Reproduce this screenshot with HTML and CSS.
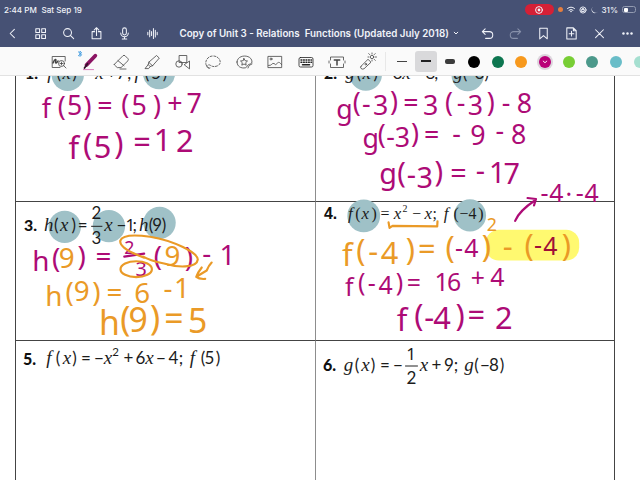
FILE: index.html
```html
<!DOCTYPE html>
<html lang="en">
<head>
    <meta charset="UTF-8">
    <meta name="viewport" content="width=device-width, initial-scale=1.0">
    <title>Copy of Unit 3 - Relations Functions</title>
    <link rel="stylesheet" href="styles.css">
</head>
<body>
    <header class="header">
        <div class="status">
            <span class="time">2:44 PM</span>
            <span class="date">Sat Sep 19</span>
            <div class="status-right">
                <span class="record"><svg width="10" height="10" viewBox="0 0 10 10"><circle cx="5" cy="5" r="3.4"/><circle class="solid" cx="5" cy="5" r="1.4"/></svg></span>
                <span class="mic-dot"></span>
                <svg width="8" height="7" viewBox="0 0 8 7"><path d="M.5 2.5Q4-.4 7.5 2.5M2 4.2Q4 2.6 6 4.2"/><circle class="solid" cx="4" cy="5.5" r=".8"/></svg>
                <svg class="lock" width="8" height="8" viewBox="0 0 8 8"><circle cx="4" cy="4" r="3.1"/><path d="M2.7 3.7h2.6v1.8H2.7zM3.2 3.7V2.5h1.6v1.2"/></svg>
                <svg class="moon" width="7" height="8" viewBox="0 0 7 8"><path class="solid" d="M2 .8A3.5 3.5 0 1 0 7 5.5 3.4 3.4 0 0 1 2 .8z"/></svg>
                <span class="percent">31%</span>
                <span class="battery"><i></i></span>
            </div>
        </div>
        <nav class="nav">
            <div class="nav-group">
                <svg viewBox="0 0 16 16"><path d="M10 3.5L5.5 8l4.5 4.5"/></svg>
                <svg viewBox="0 0 16 16"><path d="M3 3h4v4H3zM9.3 3h4v4h-4zM3 9.3h4v4H3zM9.3 9.3h4v4h-4z"/></svg>
                <svg viewBox="0 0 16 16"><circle cx="7" cy="7" r="4.2"/><path d="M10 10l3.5 3.5"/></svg>
                <svg viewBox="0 0 16 16"><path d="M6 6H3.3v7.5h9.4V6H10M8 10V2M5.5 4.3L8 1.8l2.5 2.5"/></svg>
                <svg viewBox="0 0 16 16"><rect x="6" y="2" width="4" height="7.5" rx="2"/><path d="M4 7.5a4 4 0 0 0 8 0M8 11.7v2.2M5.6 13.9h4.8"/></svg>
                <svg viewBox="0 0 16 16"><path d="M3 6.8v2.6M5 4.5v7M7 6v4M9 2.8v10.4M11 4.6v7M13 6.8v2.6"/></svg>
            </div>
            <div class="title">Copy of Unit 3 - Relations&nbsp; Functions (Updated July 2018)</div>
            <svg class="chevron" viewBox="0 0 8 8"><path d="M2.2 3.2L4 5l1.8-1.8"/></svg>
            <div class="nav-group right">
                <svg viewBox="0 0 16 16"><path d="M5.5 3L2.5 6l3 3M2.7 6H10a3.6 3.6 0 0 1 0 7.2H6"/></svg>
                <svg class="dim" viewBox="0 0 16 16"><path d="M10.5 3l3 3-3 3M13.3 6H6a3.6 3.6 0 0 0 0 7.2h4"/></svg>
                <svg viewBox="0 0 16 16"><path d="M4 2.3h8v11.4l-4-3.5-4 3.5z"/></svg>
                <svg viewBox="0 0 16 16"><path d="M3 2h7l3 3v8.8H3zM10 2v3h3M8 5.7v5M5.5 8.2h5"/></svg>
                <svg viewBox="0 0 16 16"><path d="M3.8 4l8.4 8.4M12.2 4l-8.4 8.4"/></svg>
                <svg viewBox="0 0 16 16"><g class="solid"><circle cx="3.7" cy="8" r="1.3"/><circle cx="8" cy="8" r="1.3"/><circle cx="12.3" cy="8" r="1.3"/></g></svg>
            </div>
        </nav>
    </header>

    <div class="toolbar">
        <div class="tools">
            <svg viewBox="0 0 18 18"><path d="M10 14.5H2.2v-11h13V8"/><path class="bold" d="M3 10c2-5 3.5-4 2.7-1.5S7 10 8 8"/><circle cx="11.5" cy="10.5" r="3"/><path d="M13.7 12.7l2.3 2.3M10 10.5h3M11.5 9v3"/></svg>
            <svg class="pen" viewBox="0 0 18 18"><path class="pen-body" d="M14.3 2.7L5.5 12"/><path class="pen-tip" d="M6.5 10.8l-3 4.2"/><path class="pen-line" d="M2.5 16.6h10"/><path class="bluetooth" d="M-2.7-1.2l3.4 3-1.7 1.7v-5.4l1.7 1.7-3.4 3"/></svg>
            <svg viewBox="0 0 18 18"><path d="M2.5 11.2L11 2.7q1-.8 2 0l3 3q.8 1 0 2L9 14.6H5.3L2.5 12q-.4-.4 0-.8zM6 7.7l6 5M8 16h6"/></svg>
            <svg viewBox="0 0 18 18"><path d="M6 9l7.5-6.5 2.8 2.6L9.8 12.5zM6 9l-.8 2.6 2 2 2.6-1.1M5.2 11.6L2 15.6h3.5l1.7-2"/></svg>
            <svg viewBox="0 0 18 18"><path d="M5.5 2.5h7.3v7H5.5z"/><circle cx="5" cy="11" r="3.2"/><path d="M10.5 11.5l5-3.5v7.5z"/></svg>
            <svg viewBox="0 0 18 18"><path class="dash" d="M5 15C-1 12 2 3 9 3s10 8 4 10-6-2-9-1 0 4 2 3"/></svg>
            <svg viewBox="0 0 18 18"><path d="M2 9c0-8 15-8 15 0 0 2-3 2-4 3s-1 3-4 3c-5 0-7-3-7-6zM13 15c1-3 2-3 4-4"/><path d="M9 5.5l1.1 2.2 2.4.3-1.8 1.7.5 2.5L9 11l-2.2 1.2.5-2.5L5.5 8l2.4-.3z"/></svg>
            <svg viewBox="0 0 18 18"><path d="M2.3 3.4h13.4v11.2H2.3zM2.5 12.5C6 13 6 9.5 8 10.5s1 2 3 0 2.5-1.2 4.5 1"/><circle cx="5" cy="6" r="1"/></svg>
            <svg class="keyboard" viewBox="0 0 18 18"><rect x="2" y="4.5" width="14" height="9.5" rx="1.5"/><path class="keys" d="M4 7h10.5M4 9.3h10.5"/><path class="bold" d="M5.5 11.8h7"/></svg>
            <svg viewBox="0 0 18 18"><path d="M2.5 7V4h13v3M2.5 11v3.5h13V11M1 8v2M17 8v2"/><path class="bold" d="M6.3 7h5.4M9 7v5"/></svg>
            <svg viewBox="0 0 18 18"><path d="M2 13.3l7-7 3 2.9-7 6.6q-2 .8-3-.4t0-2.1z"/><circle cx="6.8" cy="11.2" r=".8"/><circle cx="13" cy="4" r="1.7"/><path d="M13 0v1M16.2 4h1.3M15.2 1.6l1-1M10.7 1.6l-1-1M15.3 6.4l1 1M13 7v1M9 4h1"/></svg>
        </div>
        <div class="sizes">
            <span class="size"><i class="thin"></i></span>
            <span class="size selected"><i class="medium"></i></span>
            <span class="size"><i class="thick"></i></span>
        </div>
        <div class="colors">
            <span class="color black"></span>
            <span class="color green"></span>
            <span class="color orange"></span>
            <span class="color magenta"><svg viewBox="0 0 8 8"><path d="M2.8 3.4L4 4.5l1.2-1.1"/></svg></span>
            <span class="color lime"></span>
            <span class="color teal"></span>
            <span class="color aqua"></span>
            <span class="color mint"></span>
        </div>
    </div>

    <!-- every cell keeps the page coordinates in its viewBox -->
    <main class="sheet">
        <section class="cell">
            <svg viewBox="15 76 300 126">
                <g class="spot"><circle cx="67" cy="74.7" r="16.3"/><circle cx="159" cy="73" r="16.3"/></g>
                <text class="number" x="24" y="79">1.</text>
                <text class="math" y="79" x="49 58 66 74 86 99 111 121 129 137 147 156 165"><tspan class="var">f</tspan>(<tspan class="var">x</tspan>)=<tspan class="var">x</tspan>+7;<tspan class="var">f</tspan>(5)</text>
                <text class="ink s27" x="45.5 61 74 87 104.5 125 139 157 175 194.5" y="118 116 115 116 115 114 115 115 113 113">f(5)=(5)+7</text>
                <text class="ink s30" x="73 87 102 118.5 142 162.5 185" y="160 156 159 155 154 152 153">f(5)=12</text>
            </svg>
        </section>
        <section class="cell">
            <svg viewBox="315 76 300 126">
                <g class="spot"><circle cx="365" cy="74.5" r="16.3"/><circle cx="467.7" cy="75" r="16.3"/></g>
                <text class="number" x="323" y="79">2.</text>
                <text class="math" y="79" x="349 358 366 375 384 397 406 422 430 436 449 458 465 473 482"><tspan class="var">g</tspan>(<tspan class="var">x</tspan>)=3<tspan class="var">x</tspan>−8; <tspan class="var">g</tspan>(−3)</text>
                <text class="ink s27" x="343.5 356 365.5 380 393.5 410.5 430.5 449 461 475.5 491 506.5 525" y="119 112 113 115 111 112 115 112 112 115 112 112 113">g(-3)=3(-3)-8</text>
                <text class="ink s27" x="370 381 390 402 414.5 431.5 456.5 478 500 519" y="149 145 147 148 144 145 144 146 141 145">g(-3)=-9-8</text>
                <text class="ink s29" x="387.5 401 411 424.5 438.5 458.5 480.5 497.5 512" y="185 184 186 189 183 184 182 184 185">g(-3)=-17</text>
            </svg>
        </section>
        <section class="cell">
            <svg viewBox="15 202 300 139">
                <g class="spot"><circle cx="64" cy="227" r="16.3"/><circle cx="108.5" cy="226.3" r="16.3"/><circle cx="159.5" cy="223" r="16.3"/></g>
                <text class="number" x="23" y="231.5">3.</text>
                <text class="math" y="231" x="48 55.5 63.5 73 82 108 121 130 134.5 143.5 151 157 164"><tspan class="var">h</tspan>(<tspan class="var">x</tspan>)=<tspan class="var">x</tspan>−<tspan class="one">1</tspan>;<tspan class="var">h</tspan>(9)</text>
                <text class="math" x="96" y="219.5">2</text>
                <path class="bar" d="M91 226.5h10.5"/>
                <text class="math" x="96" y="244">3</text>
                <text class="ink s28" x="40 55.5 66 81 103 158 172.5 189 207 228" y="271 268 268 266 266 266 266 267 263 265">h(<tspan class="amber">9</tspan>)=(<tspan class="amber">9</tspan>)-1</text>
                <text class="ink s19" x="129" y="254">2</text>
                <path class="stroke" d="M124 257l20-3"/>
                <text class="ink s21" x="141" y="277">3</text>
                <path class="stroke amber-line" d="M144 258C130 253 119 247 120 241C122 235 136 235 150 237C174 241 198 253 198 260C197 269 177 268 164 264C155 262 148 260 143 257"/>
                <ellipse class="stroke amber-line" cx="136" cy="269.7" rx="15.8" ry="8"/>
                <path class="stroke amber-line" d="M212 263q-3 3-5 8l-10 6M202 268q-4 5-5.500 9.500q3 2.500 9 2"/>
                <text class="ink amber s28" x="53 69 81 96 114 142 168 182" y="307 303 302 303 303 304 299 299">h(9)=6-1</text>
                <text class="ink amber s31" x="109 125 138 155 174 198" y="336 332 333 331 332 334">h(9)=5</text>
            </svg>
        </section>
        <section class="cell">
            <svg viewBox="315 202 300 139">
                <g class="spot"><circle cx="363" cy="216" r="16.5"/><circle cx="470" cy="215.5" r="16.2"/></g>
                <text class="number arial" x="323" y="219.5">4.</text>
                <text class="math times" y="219.5" x="349.5 357 364.5 373.5 384.5 397 416.500 428 434.500 446 456 464 472.500 481"><tspan class="var">f</tspan>(<tspan class="var">x</tspan>)=<tspan class="var">x</tspan>−<tspan class="var">x</tspan>;<tspan class="var">f</tspan>(−4)</text>
                <text class="math times power" x="404.5" y="212.5">2</text>
                <rect class="highlight" x="486" y="230" width="94" height="31" rx="13"/>
                <path class="stroke amber-line" d="M388 222.5l1 5.5 3-2 45 .5.3-5"/>
                <text class="ink amber s30" x="346.5 360 372.5 389 410 426.5 450 486.5 508 529.5 567" y="266 261 262 264 260 260 258 257 257 256 256">f(-4)=()-()</text>
                <text class="ink s25" x="459 471.5" y="257 257">-4</text>
                <text class="ink dark s25" x="538.5 551" y="254 255">-4</text>
                <text class="ink amber s19" x="492" y="231">2</text>
                <text class="ink s25" x="348.5 361 371 385 399 413.5 441.5 454 478 497.5" y="297 292 293 295 292 293 292 292 288 287">f(-4)=16+4</text>
                <text class="ink s30" x="401.5 418.5 429 442 460 476.5 504" y="332 327 329 330 327 327 330">f(-4)=2</text>
                <path class="stroke" d="M515.5 221C519 212 527 206 536 200M528 198l8.5 1-2 6.5"/>
                <text class="ink s25" x="545 557 569.5 580.5 592.500" y="202 202 203 202 202">-4·-4</text>
            </svg>
        </section>
        <section class="cell">
            <svg viewBox="15 341 300 139">
                <text class="number" x="23" y="365">5.</text>
                <text class="math" y="364" x="49 58 67 74.5 86 99 108 128.5 140.5 149.5 161 173.5 181 192.5 203 209.5 218"><tspan class="var">f</tspan>(<tspan class="var">x</tspan>)=−<tspan class="var">x</tspan>+6<tspan class="var">x</tspan>−4;<tspan class="var">f</tspan>(5)</text>
                <text class="math power" x="115.5" y="355.5">2</text>
            </svg>
        </section>
        <section class="cell">
            <svg viewBox="315 341 300 139">
                <text class="number" x="323" y="371">6.</text>
                <text class="math" y="370.5" x="348.5 357 365.5 373 385 398 424 436.5 449 456 469 476.5 485 494 502"><tspan class="var">g</tspan>(<tspan class="var">x</tspan>)=−<tspan class="var">x</tspan>+9;<tspan class="var">g</tspan>(−8)</text>
                <text class="math one" x="411" y="359.5">1</text>
                <path class="bar" d="M405.5 366h12"/>
                <text class="math" x="411.5" y="384">2</text>
            </svg>
        </section>
    </main>
</body>
</html>
```
FILE: styles.css
```css
* {
    box-sizing: border-box;
}
body {
    margin: 0;
    width: 640px;
    height: 480px;
    overflow: hidden;
    background-color: white;
    font-family: Inter, "Liberation Sans", sans-serif;
    display: flex;
    flex-direction: column;
}
svg {
    display: block;
    flex: none;
    fill: none;
    stroke: currentColor;
    stroke-linecap: round;
    stroke-linejoin: round;
}
.solid {
    fill: currentColor;
    stroke: none;
}

/* header */
.header {
    height: 47px;
    flex: none;
    background-color: #465174;
    color: #f1f3f9;
}
.status {
    height: 19px;
    display: flex;
    align-items: center;
    padding: 0 4px 0 4px;
    font-size: 8.1px;
    font-weight: 500;
}
.time {
    width: 37.5px;
}
.status-right {
    margin-left: auto;
    display: flex;
    align-items: center;
    gap: 4px;
}
.status-right svg {
    stroke-width: 1;
}
.status-right .lock {
    stroke-width: 0.9;
}
.record {
    width: 29px;
    height: 11px;
    border-radius: 6px;
    background-color: #d52036;
    display: flex;
    align-items: center;
    justify-content: center;
}
.mic-dot {
    width: 5px;
    height: 5px;
    border-radius: 50%;
    background-color: #e57e3e;
}
.battery {
    width: 14px;
    height: 7px;
    border: 1px solid #929ab0;
    border-radius: 2.5px;
    padding: 0.5px;
}
.battery i {
    display: block;
    width: 4px;
    height: 4px;
    border-radius: 1px;
    background-color: white;
}
.nav {
    height: 28px;
    display: flex;
    align-items: center;
    padding: 0 5px 0 5px;
}
.nav-group {
    display: flex;
    gap: 13.1px;
}
.nav-group svg {
    width: 15px;
    height: 15px;
    stroke-width: 1.1;
}
.nav-group.right {
    margin-left: auto;
}
.nav-group .dim {
    color: #8790aa;
}
.title {
    width: 272px;
    margin-left: 19px;
    font-size: 9.78px;
    font-weight: 600;
    white-space: nowrap;
}
.chevron {
    width: 8px;
    height: 8px;
    margin-left: 1px;
}

/* toolbar */
.toolbar {
    height: 29px;
    flex: none;
    background-color: #fafafa;
    border-bottom: 1px solid #e2e2e2;
    display: flex;
    align-items: center;
    padding-left: 50px;
    overflow: hidden;
}
.tools {
    display: flex;
    gap: 12.9px;
    padding-top: 1px;
    padding-right: 8px;
    border-right: 1px solid #e8e8e8;
    color: #444;
}
.tools svg {
    width: 18px;
    height: 18px;
    stroke-width: 0.8;
    overflow: visible;
}
.tools .bold {
    stroke-width: 1.5;
}
.dash {
    stroke-dasharray: 2 1.6;
}
.keys {
    stroke-width: 1.5;
    stroke-dasharray: 0.8 1.7;
}
.keyboard {
    color: #222;
}
.pen-body {
    stroke: #8c1463;
    stroke-width: 3.8;
}
.pen-tip {
    stroke: #32132b;
    stroke-width: 1.8;
}
.pen-line {
    stroke: #d15bab;
    stroke-width: 0.8;
}
.bluetooth {
    stroke: #2f93de;
}
.sizes {
    display: flex;
    gap: 2px;
    margin-left: 5px;
}
.size {
    width: 22px;
    height: 21px;
    border-radius: 3px;
    display: flex;
    align-items: center;
    justify-content: center;
}
.selected {
    background-color: #d9d9db;
}
.size i {
    width: 10px;
    height: 1px;
    background-color: #444;
}
.size .medium {
    height: 2px;
    background-color: #222;
}
.size .thick {
    height: 5px;
    border-radius: 2px;
    background-color: #3b3b3b;
}
.colors {
    display: flex;
    align-items: center;
    gap: 11.7px;
    margin-left: 7px;
    padding-top: 1px;
}
.color {
    width: 12px;
    height: 12px;
    flex: none;
    border-radius: 50%;
}
.black { background-color: #000; }
.green { background-color: #0d7650; }
.orange { background-color: #f7991d; }
.magenta {
    background-color: #b90078;
    color: white;
    box-shadow: 0 0 0 2px #dcd5dc;
}
.magenta svg {
    width: 12px;
    height: 12px;
    stroke-width: 0.6;
}
.lime { background-color: #78ce35; }
.teal { background-color: #4c998b; }
.aqua { background-color: #69bdc8; }
.mint { background-color: #a5dfd0; }

/* worksheet */
.sheet {
    flex: 1;
    display: grid;
    grid-template-columns: 300px 300px;
    grid-template-rows: 126px 139px 139px;
    margin-left: 15px;
    overflow: hidden;
}
.cell {
    border-left: 1px solid #444;
    border-bottom: 1px solid #444;
}
.cell:nth-child(even) {
    border-left: 1px solid #8d8d8d;
    border-right: 1px solid #444;
}
.cell:nth-last-child(-n+2) {
    border-bottom: none;
}
.cell svg {
    width: 300px;
    height: 100%;
    margin-left: -1px;
    overflow: visible;
    stroke: none;
}
.spot {
    fill: #9fc1c7;
}
.number {
    fill: #111;
    font: 900 16px Lato, sans-serif;
}
.arial {
    font: bold 16px "Liberation Sans", Arial, sans-serif;
}
.math {
    fill: #1c1c1c;
    font: 17px Lato, sans-serif;
    text-anchor: middle;
}
.times {
    font: 16px "Liberation Serif", "Times New Roman", serif;
}
.var {
    font-family: "Liberation Serif", "Times New Roman", serif;
    font-style: italic;
    font-size: 19px;
}
.times .var {
    font-size: 17px;
}
.one {
    font-family: "Noto Sans", sans-serif;
}
.power {
    font-size: 11.5px;
}
.times.power {
    font-size: 10px;
}
.bar {
    stroke: #222;
    stroke-width: 1;
}

/* pen ink */
.ink {
    fill: #ad0b76;
    font-family: "Noto Sans", sans-serif;
    text-anchor: middle;
}
.amber {
    fill: #ea9a27;
}
.dark {
    fill: #a00f38;
}
.stroke {
    fill: none;
    stroke: #ad0b76;
    stroke-width: 2.2;
}
.amber-line {
    stroke: #ea9a27;
}
.highlight {
    fill: #fff970;
}
.s19 { font-size: 18px; }
.s21 { font-size: 20px; }
.s25 { font-size: 25px; }
.s27 { font-size: 27px; }
.s28 { font-size: 28px; }
.s29 { font-size: 29px; }
.s30 { font-size: 31px; }
.s31 { font-size: 34px; }
```
